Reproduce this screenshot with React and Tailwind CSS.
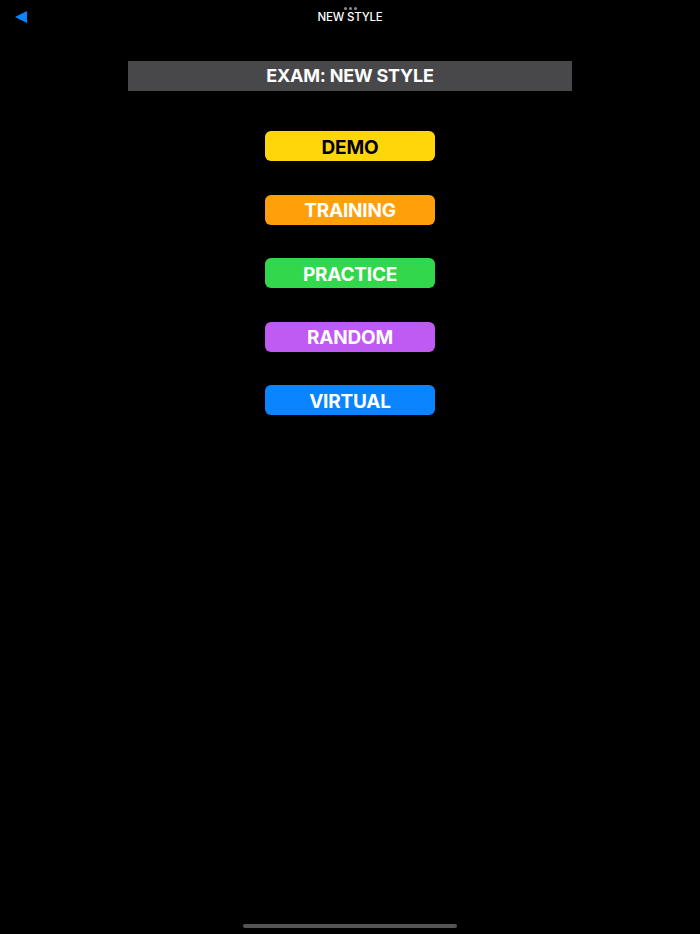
import React from "react";

const buttons = [
  { label: "DEMO", cls: "bg-[#FFD60A] text-black" },
  { label: "TRAINING", cls: "bg-[#FF9F0A] text-white" },
  { label: "PRACTICE", cls: "bg-[#32D74B] text-white" },
  { label: "RANDOM", cls: "bg-[#BF5AF2] text-white" },
  { label: "VIRTUAL", cls: "bg-[#0A84FF] text-white" },
];

export default function App() {
  return (
    <div
      className="w-[700px] h-[934px] bg-black flex flex-col relative overflow-hidden"
      style={{ fontFamily: "Inter, 'Noto Sans', sans-serif" }}
    >
      <div className="relative h-[34px] flex flex-col items-center">
        <div className="flex gap-[2px] mt-[7px]">
          <span className="w-[3px] h-[3px] rounded-full bg-[#8e8e93]" />
          <span className="w-[3px] h-[3px] rounded-full bg-[#8e8e93]" />
          <span className="w-[3px] h-[3px] rounded-full bg-[#8e8e93]" />
        </div>
        <div className="text-white text-[11.5px] font-medium leading-none mt-[2px] tracking-[-0.2px]">NEW STYLE</div>
        <svg className="absolute left-[15px] top-[11px]" width="12" height="12" viewBox="0 0 12 12">
          <polygon points="0,6 12,0 12,12" fill="#0A84FF" />
        </svg>
      </div>
      <div className="mt-[27px] mx-auto w-[444px] h-[30px] bg-[#48484A] flex items-center justify-center">
        <span className="text-white text-[18px] font-bold leading-none tracking-[-0.2px]">EXAM: NEW STYLE</span>
      </div>
      <div className="flex flex-col items-center gap-[33.5px] mt-[40px]">
        {buttons.map((b) => (
          <div
            key={b.label}
            className={`w-[170px] h-[30px] rounded-[6px] flex items-center justify-center pt-[2px] ${b.cls}`}
          >
            <span className="text-[19px] font-bold leading-none tracking-[-0.2px]">{b.label}</span>
          </div>
        ))}
      </div>
      <div className="absolute bottom-[6px] left-[243px] w-[214px] h-[4px] rounded-full bg-[#555555]" />
    </div>
  );
}
